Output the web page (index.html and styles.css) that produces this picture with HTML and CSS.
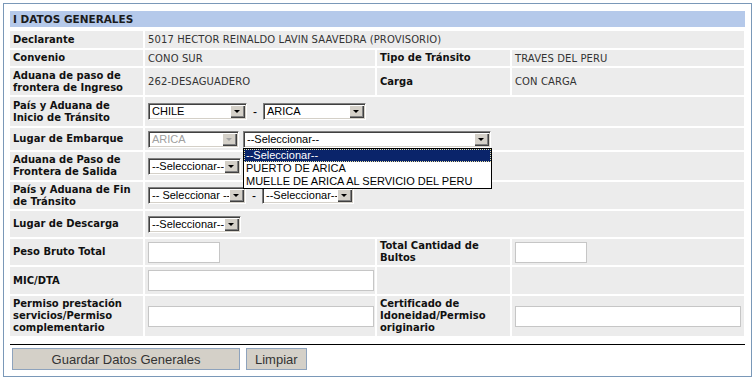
FILE: index.html
```html
<!DOCTYPE html>
<html lang="es">
<head>
  <meta charset="UTF-8">
  <title>Datos Generales</title>
  <link rel="stylesheet" href="styles.css">
</head>
<body>

  <div class="panel">
    <div class="section-title">I DATOS GENERALES</div>

    <div class="form-grid">
      <!-- Declarante -->
      <div class="label r1">Declarante</div>
      <div class="value span3">5017 HECTOR REINALDO LAVIN SAAVEDRA (PROVISORIO)</div>

      <div class="label">Convenio</div>
      <div class="value">CONO SUR</div>
      <div class="label">Tipo de Tránsito</div>
      <div class="value">TRAVES DEL PERU</div>

      <div class="label">Aduana de paso de<br>frontera de Ingreso</div>
      <div class="value">262-DESAGUADERO</div>
      <div class="label">Carga</div>
      <div class="value">CON CARGA</div>

      <div class="label">País y Aduana de<br>Inicio de Tránsito</div>
      <div class="value span3 controls">
        <span class="select w-chile"><span class="select-text">CHILE</span><span class="select-btn"></span></span>
        <span class="dash">-</span>
        <span class="select w-arica"><span class="select-text">ARICA</span><span class="select-btn"></span></span>
      </div>

      <div class="label">Lugar de Embarque</div>
      <div class="value span3 controls">
        <span class="select w-90 disabled"><span class="select-text">ARICA</span><span class="select-btn"></span></span>
        <span class="select w-248 open">
          <span class="select-text">--Seleccionar--</span><span class="select-btn"></span>
          <span class="select-list">
            <span class="option selected">--Seleccionar--</span>
            <span class="option">PUERTO DE ARICA</span>
            <span class="option">MUELLE DE ARICA AL SERVICIO DEL PERU</span>
          </span>
        </span>
      </div>

      <div class="label">Aduana de Paso de<br>Frontera de Salida</div>
      <div class="value span3 controls">
        <span class="select w-92"><span class="select-text">--Seleccionar--</span><span class="select-btn"></span></span>
      </div>

      <div class="label">País y Aduana de Fin<br>de Tránsito</div>
      <div class="value span3 controls">
        <span class="select w-97"><span class="select-text">-- Seleccionar --</span><span class="select-btn"></span></span>
        <span class="dash">-</span>
        <span class="select w-91"><span class="select-text">--Seleccionar--</span><span class="select-btn"></span></span>
      </div>

      <div class="label">Lugar de Descarga</div>
      <div class="value span3 controls">
        <span class="select w-92"><span class="select-text">--Seleccionar--</span><span class="select-btn"></span></span>
      </div>

      <div class="label">Peso Bruto Total</div>
      <div class="value controls"><input class="input short" type="text"></div>
      <div class="label">Total Cantidad de<br>Bultos</div>
      <div class="value controls"><input class="input short" type="text"></div>

      <div class="label">MIC/DTA</div>
      <div class="value controls"><input class="input wide" type="text"></div>
      <div class="label"></div>
      <div class="value"></div>

      <div class="label">Permiso prestación<br>servicios/Permiso<br>complementario</div>
      <div class="value controls"><input class="input wide" type="text"></div>
      <div class="label">Certificado de<br>Idoneidad/Permiso<br>originario</div>
      <div class="value controls"><input class="input wide" type="text"></div>
    </div>

    <div class="actions">
      <button class="btn btn-save">Guardar Datos Generales</button>
      <button class="btn">Limpiar</button>
    </div>
  </div>

</body>
</html>
```

FILE: styles.css
```css
body {
  margin: 0;
  background-color: #ffffff;
  font-family: "DejaVu Sans", Verdana, sans-serif;
  color: #000;
}

.panel {
  margin: 3px;
  border: 1px solid #7a98b8; /* blue-gray frame */
  padding: 7px 6px 6px 6px;
}

.section-title {
  background-color: #b5c9ea;
  height: 16px;
  line-height: 17px;
  padding-left: 3px;
  font-size: 10.5px;
  font-weight: bold;
  color: #1b1b1b;
  margin-bottom: 4px;
}

.form-grid {
  display: grid;
  grid-template-columns: 133px 230px 133px 232px;
  grid-template-rows: 17px 16px 27px 29px 22px 28px 27px 26px 26px 27px 40px;
  gap: 2px;
}

.label,
.value {
  background-color: #ececec;
  display: flex;
  align-items: center;
  padding-left: 3px;
}

.label {
  font-size: 10px;
  font-weight: bold;
  line-height: 12px;
  color: #111;
}

.value {
  font-size: 10px;
  color: #333;
  letter-spacing: 0.1px;
}

.span3 {
  grid-column: span 3;
}

.controls {
  letter-spacing: 0;
}

.dash {
  width: 16px;
  text-align: center;
  font-family: "Liberation Sans", Arial, sans-serif;
  font-size: 12px;
  color: #000;
}

/* windows style dropdowns */
.select {
  position: relative;
  display: inline-flex;
  box-sizing: border-box;
  height: 17px;
  padding: 1px;
  background-color: #fff;
  border: 1px solid;
  border-color: #808080 #fff #fff #808080;
  box-shadow: inset 1px 1px 0 #404040, inset -1px -1px 0 #d4d0c8;
  font-family: "Liberation Sans", Arial, sans-serif;
  font-size: 11px;
  color: #000;
}

.select + .select {
  margin-left: 4px;
}

.select-text {
  flex: 1;
  padding-left: 2px;
  line-height: 13px;
  white-space: nowrap;
  overflow: hidden;
}

.select-btn {
  position: relative;
  width: 15px;
  background-color: #d4d0c8;
  box-shadow: inset 1px 1px 0 #fff, inset -1px -1px 0 #404040, inset -2px -2px 0 #808080;
}

.select-btn::after {
  content: "";
  position: absolute;
  left: 4px;
  top: 5px;
  border-left: 3px solid transparent;
  border-right: 3px solid transparent;
  border-top: 3px solid #000;
}

.select.disabled .select-text {
  color: #a0a0a0;
}

.select.disabled .select-btn::after {
  border-top-color: #a0a0a0;
}

.select-list {
  position: absolute;
  top: 16px;
  left: -1px;
  width: 249px;
  box-sizing: border-box;
  border: 1px solid #000;
  background-color: #fff;
  z-index: 2;
}

.option {
  display: block;
  height: 13px;
  line-height: 13px;
  padding-left: 2px;
  white-space: nowrap;
}

.option.selected {
  background-color: #0a246a;
  color: #fff;
  outline: 1px dotted #e8e0a0;
  outline-offset: -1px;
}

.w-chile { width: 99px; }
.w-arica { width: 103px; }
.w-90 { width: 91px; }
.w-248 { width: 248px; }
.w-92 { width: 93px; }
.w-97 { width: 98px; }
.w-91 { width: 92px; }

.input {
  box-sizing: border-box;
  height: 21px;
  margin: 0;
  border: 1px solid #c6c6c6;
  background-color: #fff;
}

.input.short { width: 72px; }
.input.wide { width: 226px; }

.actions {
  margin-top: 8px;
  border-top: 1px solid #000;
  padding: 3px 0 0 2px;
  display: flex;
  gap: 6px;
}

.btn {
  height: 22px;
  padding: 0 8px;
  background-color: #d4d0c8;
  border: 1px solid #8ea3bd;
  font-family: "Liberation Sans", Arial, sans-serif;
  font-size: 13px;
  color: #333;
}

.btn-save {
  width: 228px;
}
```
